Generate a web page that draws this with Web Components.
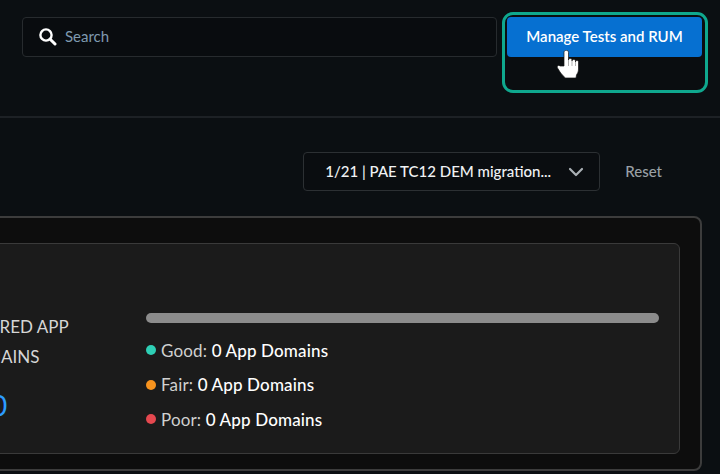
<!DOCTYPE html>
<html>
<head>
<meta charset="utf-8">
<style>
  html, body { margin: 0; height: 474px; overflow: hidden; background: #0b0f12; }
  body { font-family: Lato, "Open Sans", sans-serif; }
</style>
</head>
<body>
<app-page>
  <top-bar slot="top"></top-bar>
  <filter-row slot="filters" label="1/21 | PAE TC12 DEM migration..."></filter-row>
  <summary-card slot="card">
    <legend-row color="#2ecfb5" label="Good:" value="0 App Domains"></legend-row>
    <legend-row color="#f7931e" label="Fair:" value="0 App Domains"></legend-row>
    <legend-row color="#e5484f" label="Poor:" value="0 App Domains"></legend-row>
  </summary-card>
</app-page>

<script>
class AppPage extends HTMLElement {
  connectedCallback() {
    const shadow = this.attachShadow({mode: 'open'});
    shadow.innerHTML = `
      <style>
        :host { display: block; width: 720px; height: 474px; overflow: hidden; color: #fff; }
      </style>
      <slot name="top"></slot>
      <slot name="filters"></slot>
      <slot name="card"></slot>
    `;
  }
}

class TopBar extends HTMLElement {
  connectedCallback() {
    const shadow = this.attachShadow({mode: 'open'});
    shadow.innerHTML = `
      <style>
        :host { display: flex; box-sizing: border-box; height: 118px; padding: 12px 12px 0 22px; gap: 5px;
          border-bottom: 2px solid #1d2125; align-items: flex-start; }
        .search { flex: 1; box-sizing: border-box; height: 40px; margin-top: 5px; display: flex; align-items: center; gap: 8px;
          padding: 0 0 2px 15px; background: #090c0f; border: 1px solid #272b2e; border-radius: 4px;
          color: #7f9ab0; font-size: 15px; }
        .search svg { width: 19px; height: 19px; }
        .ring { position: relative; box-sizing: border-box; width: 206px; height: 81px; padding: 2px 3px 0 2px;
          border: 3px solid #0fa88e; border-radius: 11px; background: #0a0d10; }
        .btn { height: 40px; padding-bottom: 2px; box-sizing: border-box; border-radius: 4px; background: #0670d1; color: #fff;
          display: flex; align-items: center; justify-content: center;
          font-size: 15px; font-weight: 600; }
        .hand { position: absolute; left: 52px; top: 35px; width: 24px; height: 30px; }
      </style>
      <div class="search">
        <svg viewBox="0 0 19 19"><circle cx="8" cy="8" r="5.6" fill="none" stroke="#fff" stroke-width="2.4"/><path d="M12.2 12.2 17 17" stroke="#fff" stroke-width="3" stroke-linecap="round"/></svg>
        <span>Search</span>
      </div>
      <div class="ring">
        <div class="btn">Manage Tests and RUM</div>
        <svg class="hand" viewBox="0 0 24 30"><path d="M7 2.5c0-3 4.500-3 4.500 0v7.500c0-2 3.500-2 3.500 0v1c0-2 3.500-2 3.500 0v1c0-2 3-2 3 0v7c0 3-1 4-2 6l-.5 3H8c-1-2-3-3-5-6l-2.500-4c-1-2 1-3.500 2.500-2L7 16z" fill="#fff" stroke="#111" stroke-width=".7" stroke-linejoin="round"/><path d="M11.500 10v6M15 11v5M18.500 12v4" stroke="#999" stroke-width=".8" fill="none"/></svg>
      </div>
    `;
  }
}

class FilterRow extends HTMLElement {
  connectedCallback() {
    const shadow = this.attachShadow({mode: 'open'});
    const label = this.getAttribute('label');
    shadow.innerHTML = `
      <style>
        :host { display: flex; align-items: center; justify-content: flex-end; height: 39px; margin-top: 34px;
          padding-right: 58px; gap: 25px; font-size: 15px; }
        .select { box-sizing: border-box; width: 297px; height: 39px; display: flex; align-items: center;
          padding: 0 15px 2px 21px; justify-content: space-between;
          border: 1px solid #2c3033; border-radius: 4px; background: #0a0d10; color: #f0f2f4; font-weight: 500; }
        .select svg { width: 16px; height: 10px; margin-top: 2px; }
        .reset { color: #9aa0a5; font-weight: 500; padding-bottom: 2px; }
      </style>
      <div class="select">
        <span>${label}</span>
        <svg viewBox="0 0 16 10"><path d="M2 2l6 6 6-6" fill="none" stroke="#aab0b5" stroke-width="2.2" stroke-linecap="round" stroke-linejoin="round"/></svg>
      </div>
      <span class="reset">Reset</span>
    `;
  }
}

class SummaryCard extends HTMLElement {
  connectedCallback() {
    const shadow = this.attachShadow({mode: 'open'});
    shadow.innerHTML = `
      <style>
        :host { display: block; box-sizing: border-box; width: 802px; height: 255px; margin: 25px 0 0 -100px;
          padding: 25px 20px 15px 20px; background: #0d0d0d; border: 2px solid #3c3c3c; border-radius: 8px; }
        .inner { box-sizing: border-box; height: 100%; display: flex; padding: 69px 20px 0 6px;
          background: #1b1b1b; border: 1px solid #3a3a3a; border-radius: 6px; }
        .left { flex: none; width: 140px; margin: -1px 77px 0 0; text-align: center; color: #d6d6d6; font-size: 17px; line-height: 30px; white-space: nowrap; }
        .left p { margin: 0; }
        .left .count { margin-top: 18px; color: #2c9cff; font-size: 28px; }
        .right { flex: 1; }
        .bar { height: 10px; border-radius: 5px; background: #8c8c8c; margin-bottom: 10px; }
      </style>
      <div class="inner">
        <div class="left">
          <p>MONITORED APP</p>
          <p>DOMAINS</p>
          <p class="count">0</p>
        </div>
        <div class="right">
          <div class="bar"></div>
          <slot></slot>
        </div>
      </div>
    `;
  }
}

class LegendRow extends HTMLElement {
  connectedCallback() {
    const shadow = this.attachShadow({mode: 'open'});
    shadow.innerHTML = `
      <style>
        :host { display: flex; align-items: center; gap: 5px; height: 34.5px; font-size: 17px; color: #d0d0d0; }
        i { width: 10px; height: 10px; border-radius: 50%; background: ${this.getAttribute('color')}; }
        span { letter-spacing: .15px; }
        b { font-weight: 500; color: #fff; }
      </style>
      <i></i><span>${this.getAttribute('label')} <b>${this.getAttribute('value')}</b></span>
    `;
  }
}

customElements.define('app-page', AppPage);
customElements.define('top-bar', TopBar);
customElements.define('filter-row', FilterRow);
customElements.define('summary-card', SummaryCard);
customElements.define('legend-row', LegendRow);
</script>
</body>
</html>
